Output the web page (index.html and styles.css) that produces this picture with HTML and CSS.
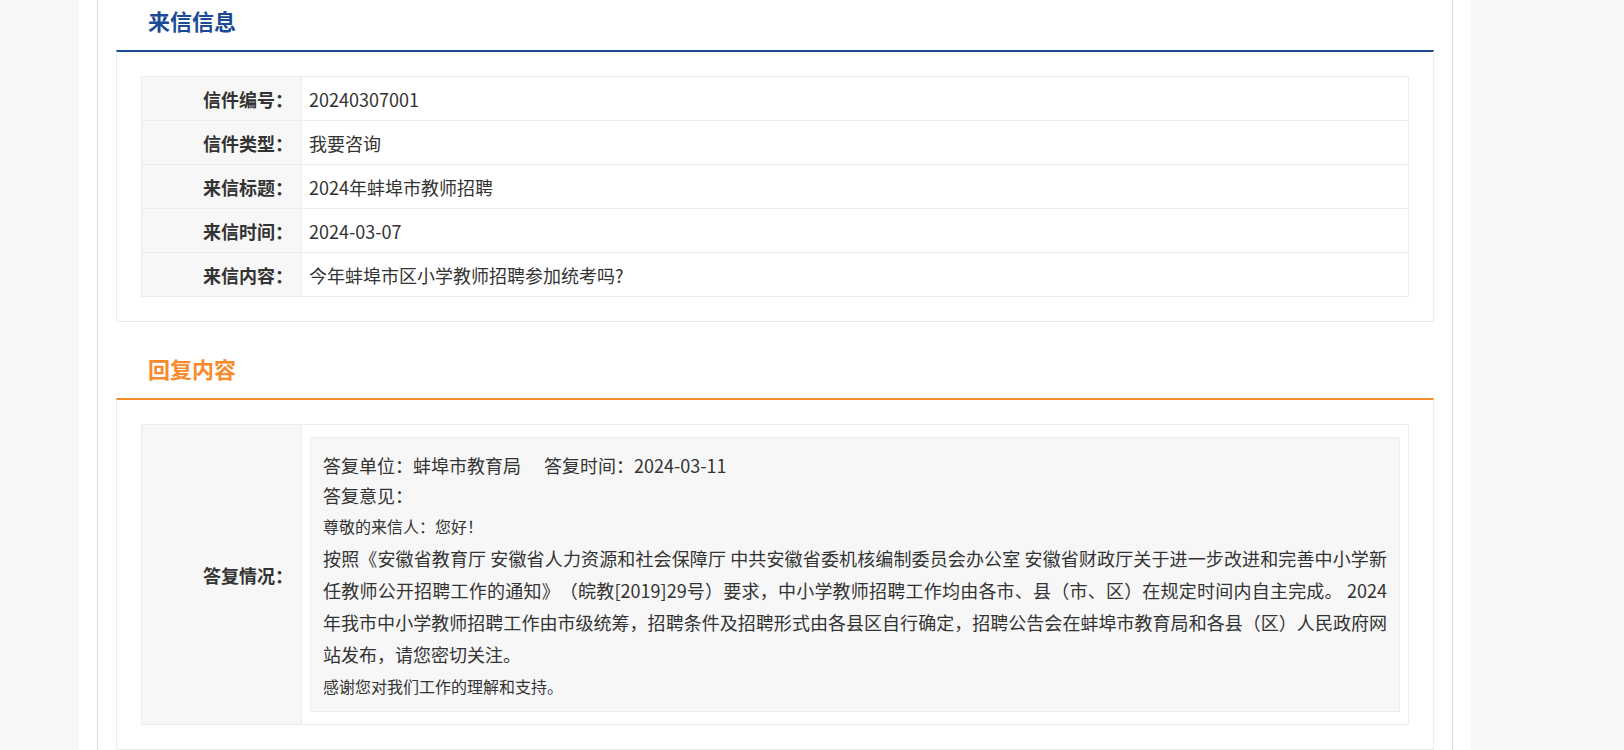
FILE: index.html
```html
<!DOCTYPE html>
<html lang="zh-CN">
<head>
<meta charset="utf-8">
<title>来信详情</title>
<link rel="stylesheet" href="styles.css">
</head>
<body>
<div class="page">
  <div class="inner">
    <section class="section">
      <div class="sec-head"><h2 class="sec-title blue">来信信息</h2></div>
      <div class="sec-box blue-top">
        <table class="info">
          <tr><td class="lbl">信件编号：</td><td class="val">20240307001</td></tr>
          <tr><td class="lbl">信件类型：</td><td class="val">我要咨询</td></tr>
          <tr><td class="lbl">来信标题：</td><td class="val">2024年蚌埠市教师招聘</td></tr>
          <tr><td class="lbl">来信时间：</td><td class="val">2024-03-07</td></tr>
          <tr><td class="lbl">来信内容：</td><td class="val">今年蚌埠市区小学教师招聘参加统考吗?</td></tr>
        </table>
      </div>
    </section>
    <section class="section reply">
      <div class="sec-head"><h2 class="sec-title orange">回复内容</h2></div>
      <div class="sec-box orange-top">
        <table class="info">
          <tr>
            <td class="lbl">答复情况：</td>
            <td class="val reply-cell">
              <div class="reply-box">
                <div class="meta">答复单位：蚌埠市教育局<span class="gap">答复时间：2024-03-11</span></div>
                <div class="meta">答复意见：</div>
                <p class="small">尊敬的来信人：您好！</p>
                <p class="body">按照《安徽省教育厅 安徽省人力资源和社会保障厅 中共安徽省委机核编制委员会办公室 安徽省财政厅关于进一步改进和完善中小学新任教师公开招聘工作的通知》（皖教[2019]29号）要求，中小学教师招聘工作均由各市、县（市、区）在规定时间内自主完成。 2024年我市中小学教师招聘工作由市级统筹，招聘条件及招聘形式由各县区自行确定，招聘公告会在蚌埠市教育局和各县（区）人民政府网站发布，请您密切关注。</p>
                <p class="small">感谢您对我们工作的理解和支持。</p>
              </div>
            </td>
          </tr>
        </table>
      </div>
    </section>
  </div>
</div>
</body>
</html>
```

FILE: styles.css
```css
* { box-sizing: border-box; }
html, body {
  margin: 0;
  padding: 0;
}
body {
  background: #f6f7f9;
  font-family: "Microsoft YaHei", "Noto Sans CJK SC", "Noto Sans", sans-serif;
  color: #333;
  height: 750px;
  overflow: hidden;
  text-spacing-trim: space-all;
}
.page {
  margin-left: 79px;
  width: 1392px;
  background: #fff;
  min-height: 750px;
}
.inner {
  margin-left: 18px;
  width: 1356px;
  border-left: 1px solid #dcdcdc;
  border-right: 1px solid #dcdcdc;
  min-height: 750px;
  padding: 0 18px;
}
.section + .section {
  margin-top: 26px;
}
.sec-head {
  height: 50px;
  padding-left: 32px;
}
.sec-title {
  margin: 0;
  font-size: 22px;
  font-weight: bold;
  line-height: 40px;
}
.blue { color: #1c4b96; }
.orange { color: #f98a2c; }
.sec-box {
  border: 1px solid #ececec;
  padding: 24px;
}
.blue-top { border-top: 2px solid #1c4b96; }
.orange-top { border-top: 2px solid #f98a2c; }
.info {
  width: 100%;
  border-collapse: collapse;
  border: 1px solid #ececec;
}
.info td {
  border: 1px solid #ececec;
  font-size: 18px;
  height: 44px;
  padding: 0 7px;
  color: #333;
}
.info .lbl {
  width: 160px;
  background: #f7f7f7;
  text-align: right;
  font-weight: bold;
  padding-right: 8px;
  vertical-align: middle;
}
.info .reply-cell {
  padding: 12px 8px;
}
.reply-box {
  background: #f7f7f7;
  border: 1px solid #ececec;
  padding: 12px 12px 9px;
}
.meta {
  font-size: 18px;
  line-height: 30px;
}
.gap {
  margin-left: 23px;
}
.reply-box p {
  margin: 0;
  text-align: justify;
}
.reply-box .small {
  font-size: 16px;
  line-height: 32px;
}
.reply-box .body {
  font-size: 18px;
  line-height: 32px;
}
```
